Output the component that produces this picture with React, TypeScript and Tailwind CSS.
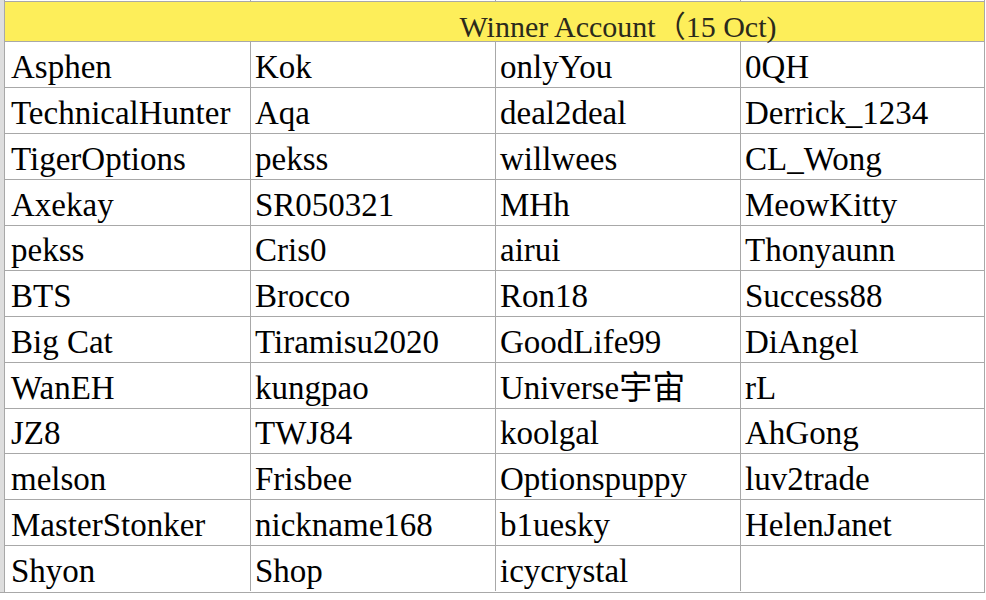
import React from "react";

const rows: string[][] = [
  ["Asphen", "Kok", "onlyYou", "0QH"],
  ["TechnicalHunter", "Aqa", "deal2deal", "Derrick_1234"],
  ["TigerOptions", "pekss", "willwees", "CL_Wong"],
  ["Axekay", "SR050321", "MHh", "MeowKitty"],
  ["pekss", "Cris0", "airui", "Thonyaunn"],
  ["BTS", "Brocco", "Ron18", "Success88"],
  ["Big Cat", "Tiramisu2020", "GoodLife99", "DiAngel"],
  ["WanEH", "kungpao", "Universe宇宙", "rL"],
  ["JZ8", "TWJ84", "koolgal", "AhGong"],
  ["melson", "Frisbee", "Optionspuppy", "luv2trade"],
  ["MasterStonker", "nickname168", "b1uesky", "HelenJanet"],
  ["Shyon", "Shop", "icycrystal", ""],
];

const heights = [46, 46, 46, 46, 45, 46, 46, 46, 45, 46, 46, 46];

const serif = {
  fontFamily: '"Liberation Serif", "Noto Sans CJK SC", serif',
};

export default function App() {
  return (
    <div className="w-[986px] h-[600px] bg-white overflow-hidden" style={serif}>
      <div className="flex h-[593px]">
        <div className="w-[4px] h-[593px] bg-[#dedede] border-b border-[#a8a8a8]" />
        <div className="w-[981px] h-[593px] border-l border-r border-b border-[#a8a8a8] flex flex-col">
          {/* partial row above */}
          <div className="grid grid-cols-[246px_245px_245px_244px] h-[1px] shrink-0">
            <div className="border-r border-[#a8a8a8]" />
            <div className="border-r border-[#a8a8a8]" />
            <div className="border-r border-[#a8a8a8]" />
            <div />
          </div>
          {/* header */}
          <div className="grid grid-cols-[246px_734px] h-[41px] shrink-0 border-t border-b border-[#a8a8a8] bg-[#fdee5a]">
            <div />
            <div className="flex items-end justify-center text-[30px] leading-[28px] text-[#2b2a1c] whitespace-nowrap">
              Winner Account（15 Oct)
            </div>
          </div>
          {rows.map((r, i) => (
            <div
              key={i}
              className={`grid grid-cols-[246px_245px_245px_244px] shrink-0 ${i < rows.length - 1 ? "border-b border-[#a8a8a8]" : ""}`}
              style={{ height: i < rows.length - 1 ? heights[i] : heights[i] - 1 }}
            >
              {r.map((c, j) => (
                <div
                  key={j}
                  className={`flex items-center pt-[4px] text-[33px] leading-[38px] text-black whitespace-nowrap overflow-hidden ${j === 0 ? "pl-[6px]" : "pl-[4px]"} ${j < 3 ? "border-r border-[#a8a8a8]" : ""}`}
                >
                  {c}
                </div>
              ))}
            </div>
          ))}
        </div>
      </div>
    </div>
  );
}
